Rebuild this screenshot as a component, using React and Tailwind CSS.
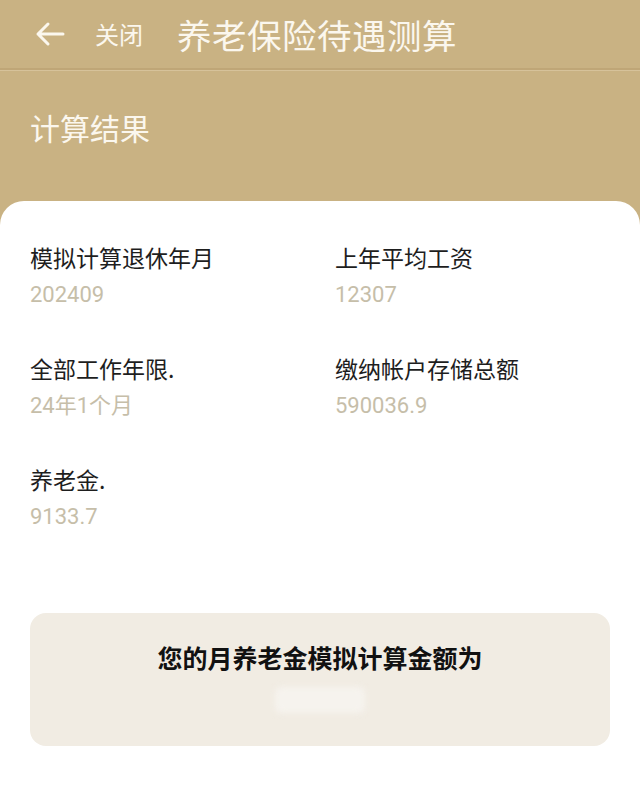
const font = { fontFamily: '"Noto Sans CJK SC", "Noto Sans", sans-serif' };
const numFont = { fontFamily: 'Roboto, "Noto Sans CJK SC", sans-serif' };

const Item = ({ label, value }) => (
  <div className="h-[111px]">
    <p className="text-[23px] leading-[30px] text-[#1e1e1e]">{label}</p>
    <p className="mt-[8px] text-[22px] leading-[30px] text-[#c6bea9]" style={numFont}>{value}</p>
  </div>
);

const App = () => {
  return (
    <div className="w-[640px] h-[808px] bg-[#c9b283] overflow-hidden flex flex-col" style={font}>
      <div className="h-[70px] shrink-0 flex items-center text-[#fbf7ee] border-b-2 border-[#bfa677] shadow-[0_1px_0_#d6c29a]">
        <svg width="30" height="26" viewBox="0 0 30 26" className="ml-[35px]" fill="none" stroke="currentColor" strokeWidth="3" strokeLinecap="round" strokeLinejoin="round">
          <path d="M28 13H3M13 3L3 13l10 10" />
        </svg>
        <span className="ml-[30px] text-[24px] leading-none">关闭</span>
        <span className="ml-[34px] text-[34.5px] leading-none tracking-[0.5px]">养老保险待遇测算</span>
      </div>

      <div className="h-[131px] shrink-0 pl-[30px] pt-[39px]">
        <p className="text-[30px] leading-[36px] text-[#fbf7ee]">计算结果</p>
      </div>

      <div className="flex-1 bg-white rounded-t-[24px] px-[30px] pt-[41px]">
        <div className="grid grid-cols-[305px_1fr]">
          <Item label="模拟计算退休年月" value="202409" />
          <Item label="上年平均工资" value="12307" />
          <Item label="全部工作年限." value="24年1个月" />
          <Item label="缴纳帐户存储总额" value="590036.9" />
          <Item label="养老金." value="9133.7" />
        </div>

        <div className="mt-[38px] h-[133px] rounded-[16px] bg-[#f1ece3] flex flex-col items-center pt-[26px]">
          <p className="text-[25px] leading-[36px] font-bold text-[#111]">您的月养老金模拟计算金额为</p>
          <div className="mt-[12px] w-[90px] h-[26px] rounded-[6px] bg-[#f6f3ee] blur-[3px]" />
        </div>
      </div>
    </div>
  );
};

export default App;
